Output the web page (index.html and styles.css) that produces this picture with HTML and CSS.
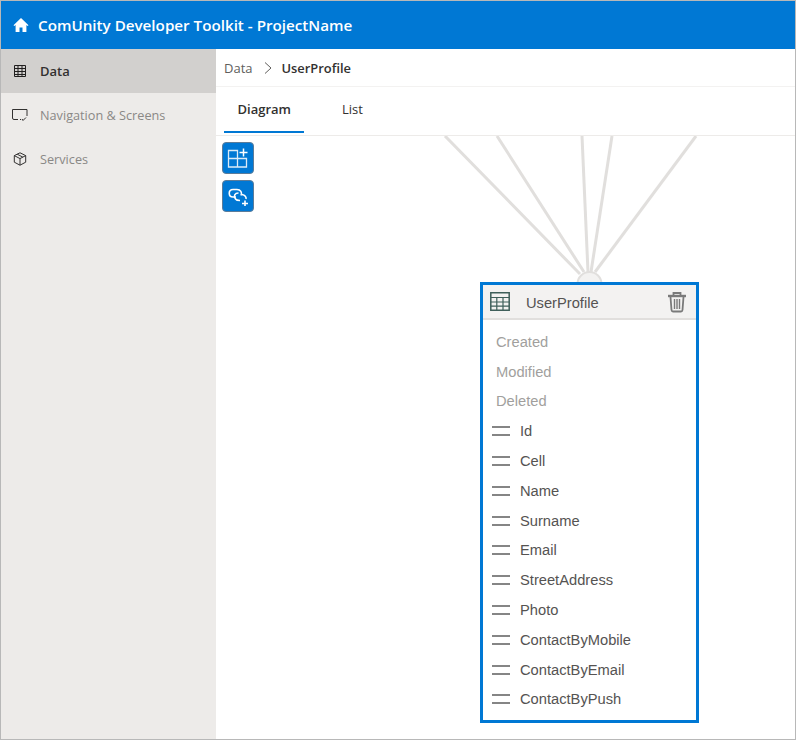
FILE: index.html
```html
<!DOCTYPE html>
<html lang="en">
<head>
    <meta charset="UTF-8">
    <meta name="viewport" content="width=device-width, initial-scale=1.0">
    <title>ComUnity Developer Toolkit</title>
    <link rel="stylesheet" href="styles.css">
</head>
<body>
    <div class="app">
        <header class="topbar">
            <svg class="home-icon" width="16" height="16" viewBox="0 0 16 16"><path d="M8 1 L0.5 8.2 L1.4 9 L2.6 8 V15 H6.5 V10.5 H9.5 V15 H13.4 V8 L14.6 9 L15.5 8.2 Z" fill="#fff"/></svg>
            <span class="app-title">ComUnity Developer Toolkit - ProjectName</span>
        </header>
        <div class="main">
            <nav class="sidebar">
                <a class="nav-item active">
                    <svg width="14" height="14" viewBox="0 0 14 14" fill="none" stroke="#201f1e"><path d="M1.5 1.5 H12.5 V12.5 H1.5 Z M1.5 4.5 H12.5 M1.5 7.5 H12.5 M1.5 10.5 H12.5 M5 1.5 V12.5 M9 1.5 V12.5"/></svg>
                    <span>Data</span>
                </a>
                <a class="nav-item">
                    <svg width="16" height="14" viewBox="0 0 16 14" fill="none" stroke="#323130"><path d="M6 11.5 H2 Q0.5 11.5 0.5 10 V1.5 H15 V8 M8 11.5 H9 M10 11 L11 12.5 L14 9.5"/></svg>
                    <span>Navigation &amp; Screens</span>
                </a>
                <a class="nav-item">
                    <svg width="14" height="14" viewBox="0 0 14 14" fill="none" stroke="#323130"><path d="M7 .8 L12.7 3.6 V10.2 L7 13.2 L1.3 10.2 V3.6 Z M1.3 3.6 L7 6.6 L12.7 3.6 M7 6.6 V13.2 M4.2 2.2 L9.8 5.1"/></svg>
                    <span>Services</span>
                </a>
            </nav>
            <section class="content">
                <div class="breadcrumb">
                    <span class="crumb">Data</span>
                    <svg class="crumb-sep" width="10" height="14" viewBox="0 0 10 14" fill="none" stroke="#605e5c"><path d="M2 1.5 L8 7 L2 12.5"/></svg>
                    <span class="crumb-current">UserProfile</span>
                </div>
                <div class="tabs">
                    <a class="tab tab-active">Diagram</a>
                    <a class="tab">List</a>
                </div>
                <div class="canvas">
                    <svg class="links" width="579" height="160" viewBox="0 0 579 160" fill="none" stroke="#e1dfdd" stroke-width="3">
                        <path d="M229 0 L364 138"/>
                        <path d="M281 0 L368 136"/>
                        <path d="M366 0 L372 136"/>
                        <path d="M396 0 L375 136"/>
                        <path d="M480 0 L379 136"/>
                        <circle cx="373.5" cy="148" r="12" fill="#f3f2f1" stroke-width="2"/>
                    </svg>
                    <div class="tools">
                        <button class="tool-btn">
                            <svg width="22" height="22" viewBox="0 0 22 22" fill="none" stroke="#dcebf7" stroke-width="1.3"><path d="M1.5 3.5 H10.5 V11.5 H1.5 Z M1.5 11.5 V20 H19.5 V11.5 H10.5 V20"/><path d="M16.5 1.5 V9.5 M12.5 5.5 H20.5" stroke="#fff" stroke-width="1.5"/></svg>
                        </button>
                        <button class="tool-btn">
                            <svg width="22" height="22" viewBox="0 0 22 22" fill="none" stroke="#fff" stroke-width="1.6"><path d="M9 12 H6 C1 12 1 4.5 6 4.5 H10 C13.5 4.5 15.5 7.5 14 10.5"/><path d="M11.5 8 C8 8 6 11 8.5 14 C9.5 15.5 11 15.5 13 15.5 M15 9.5 C18 10 19.5 12 19 14"/><path d="M18 15.5 V21 M15 18.5 H21" stroke-width="1.6"/></svg>
                        </button>
                    </div>
                    <article class="entity">
                        <div class="entity-head">
                            <svg width="20" height="20" viewBox="0 0 20 20" fill="none" stroke="#3f5f5a" stroke-width="1.2"><path d="M.8 .8 H19.2 V18.2 H.8 Z" stroke-width="1.5"/><path d="M.8 5.5 H19.2 M.8 10 H19.2 M.8 14.2 H19.2 M6.8 5 V18 M13 5 V18"/></svg>
                            <span class="entity-name">UserProfile</span>
                            <svg class="trash" width="20" height="22" viewBox="0 0 20 22" fill="none" stroke="#7a7a7a"><path d="M1 5 H19" stroke-width="2.4"/><path d="M6.5 4 V2 H13.5 V4" stroke-width="1.8"/><path d="M3.5 6 L4.5 19 Q4.7 20.5 6 20.5 H14 Q15.3 20.5 15.5 19 L16.5 6" stroke-width="1.8"/><path d="M7.5 8 V18 M10 8 V18 M12.5 8 V18" stroke-width="1.4"/></svg>
                        </div>
                        <ul class="fields">
                            <li class="field muted">Created</li>
                            <li class="field muted">Modified</li>
                            <li class="field muted">Deleted</li>
                            <li class="field"><i class="grip"></i>Id</li>
                            <li class="field"><i class="grip"></i>Cell</li>
                            <li class="field"><i class="grip"></i>Name</li>
                            <li class="field"><i class="grip"></i>Surname</li>
                            <li class="field"><i class="grip"></i>Email</li>
                            <li class="field"><i class="grip"></i>StreetAddress</li>
                            <li class="field"><i class="grip"></i>Photo</li>
                            <li class="field"><i class="grip"></i>ContactByMobile</li>
                            <li class="field"><i class="grip"></i>ContactByEmail</li>
                            <li class="field"><i class="grip"></i>ContactByPush</li>
                        </ul>
                    </article>
                </div>
            </section>
        </div>
    </div>
</body>
</html>
```

FILE: styles.css
```css
* {
    box-sizing: border-box;
}
body {
    margin: 0;
    font-family: "Open Sans", "Noto Sans", sans-serif;
    background: #fff;
}
.app {
    display: flex;
    flex-direction: column;
    width: 796px;
    height: 740px;
    border: 1px solid #b8b8b8;
    overflow: hidden;
}
.topbar {
    display: flex;
    align-items: center;
    height: 48px;
    flex-shrink: 0;
    padding-left: 12px;
    background-color: #0078d4;
    color: #fff;
}
.home-icon {
    margin-right: 9px;
}
.app-title {
    font-size: 15.2px;
    font-weight: 600;
}
.main {
    display: flex;
    flex: 1;
    min-height: 0;
}
.sidebar {
    width: 215px;
    flex-shrink: 0;
    background-color: #edebe9;
}
.nav-item {
    display: flex;
    align-items: center;
    height: 44px;
    padding-left: 11px;
    font-size: 12.7px;
    color: #8a8886;
}
.nav-item svg {
    width: 16px;
    margin-right: 12px;
}
.nav-item.active {
    background-color: #d2d0ce;
    color: #323130;
    font-weight: 600;
    font-size: 13px;
}
.content {
    display: flex;
    flex-direction: column;
    flex: 1;
    min-width: 0;
}
.breadcrumb {
    display: flex;
    align-items: center;
    height: 38px;
    flex-shrink: 0;
    padding-left: 8px;
    font-size: 13px;
    border-bottom: 1px solid #f3f2f1;
}
.crumb {
    color: #605e5c;
}
.crumb-sep {
    margin: 0 9px 0 10px;
}
.crumb-current {
    color: #323130;
    font-weight: 600;
    font-size: 12.9px;
}
.tabs {
    display: flex;
    height: 49px;
    flex-shrink: 0;
    padding-left: 8px;
    border-bottom: 1px solid #edebe9;
}
.tab {
    display: flex;
    align-items: center;
    height: 46px;
    padding: 0 13.5px;
    margin-right: 24px;
    font-size: 13px;
    color: #323130;
    border-bottom: 2px solid transparent;
}
.tab-active {
    font-weight: 600;
    border-bottom-color: #0078d4;
}
.canvas {
    position: relative;
    flex: 1;
    min-height: 0;
}
.links {
    position: absolute;
    left: 0;
    top: 0;
}
.tools {
    position: absolute;
    left: 6px;
    top: 6px;
    display: flex;
    flex-direction: column;
    gap: 6px;
}
.tool-btn {
    display: flex;
    align-items: center;
    justify-content: center;
    width: 32px;
    height: 32px;
    padding: 0;
    background-color: #0078d4;
    border: 1px solid #5c7c99;
    border-radius: 4px;
}
.entity {
    position: absolute;
    left: 264px;
    top: 146px;
    width: 219px;
    height: 441px;
    background: #fff;
    border: 3px solid #0078d4;
    font-family: "Liberation Sans", Arial, sans-serif;
}
.entity-head {
    display: flex;
    align-items: center;
    height: 35px;
    padding: 0 9px 0 7px;
    background-color: #f3f2f1;
    border-bottom: 2px solid #e1dfdd;
}
.entity-name {
    flex: 1;
    margin: 3px 0 0 16px;
    font-size: 14.7px;
    color: #555352;
}
.fields {
    list-style: none;
    margin: 0;
    padding: 7px 0 0;
}
.field {
    display: flex;
    align-items: center;
    height: 29.8px;
    padding-left: 9px;
    font-size: 14.7px;
    color: #555352;
}
.field.muted {
    padding-left: 13px;
    color: #a19f9d;
}
.grip {
    width: 18px;
    height: 10px;
    margin-right: 10px;
    border-top: 2px solid #858585;
    border-bottom: 2px solid #858585;
}
```
